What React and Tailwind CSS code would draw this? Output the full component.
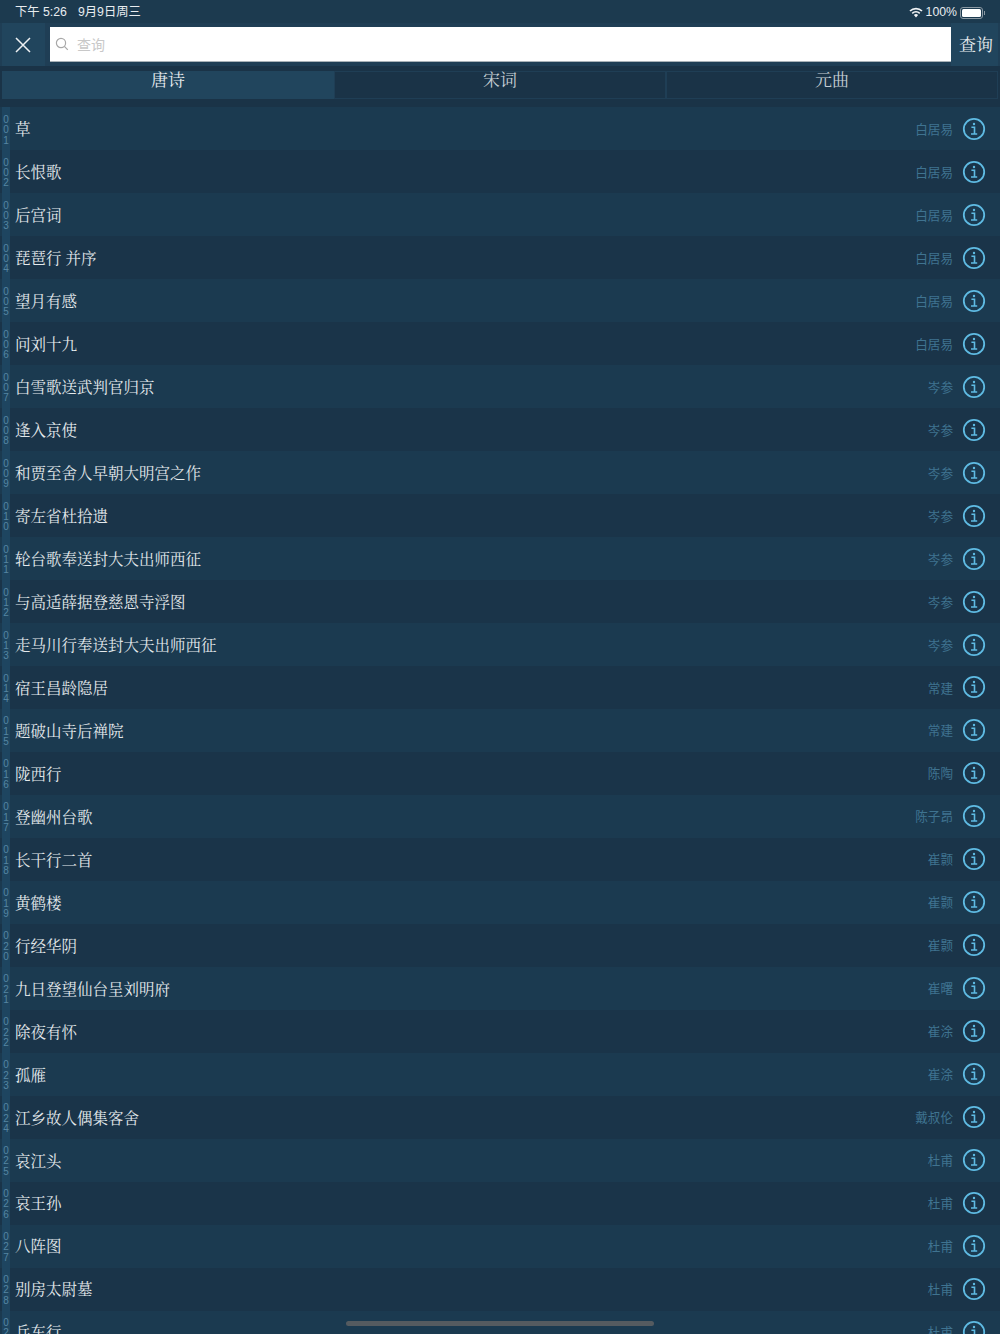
const rows = [
  ["草", "白居易"], ["长恨歌", "白居易"], ["后宫词", "白居易"], ["琵琶行 并序", "白居易"], ["望月有感", "白居易"], ["问刘十九", "白居易"],
  ["白雪歌送武判官归京", "岑参"], ["逢入京使", "岑参"], ["和贾至舍人早朝大明宫之作", "岑参"], ["寄左省杜拾遗", "岑参"], ["轮台歌奉送封大夫出师西征", "岑参"], ["与高适薛据登慈恩寺浮图", "岑参"], ["走马川行奉送封大夫出师西征", "岑参"],
  ["宿王昌龄隐居", "常建"], ["题破山寺后禅院", "常建"], ["陇西行", "陈陶"], ["登幽州台歌", "陈子昂"], ["长干行二首", "崔颢"], ["黄鹤楼", "崔颢"], ["行经华阴", "崔颢"], ["九日登望仙台呈刘明府", "崔曙"], ["除夜有怀", "崔涂"], ["孤雁", "崔涂"], ["江乡故人偶集客舍", "戴叔伦"], ["哀江头", "杜甫"], ["哀王孙", "杜甫"], ["八阵图", "杜甫"], ["别房太尉墓", "杜甫"], ["兵车行", "杜甫"],
];

const SERIF = { fontFamily: '"Noto Serif CJK SC", "Liberation Serif", "Noto Sans CJK SC", serif' };

function InfoIcon() {
  return (
    <svg width="24" height="24" viewBox="0 0 24 24" fill="none" stroke="#5fbbe3" className="shrink-0">
      <circle cx="12" cy="12" r="10.2" strokeWidth="1.8" />
      <path d="M9.4 10.2h3.1v6.6M9 17h6.2" strokeWidth="1.6" />
      <circle cx="12" cy="7" r="1.2" fill="#5fbbe3" stroke="none" />
    </svg>
  );
}

function Row({ index, title, author }) {
  const digits = String(index).padStart(3, "0").split("");
  const bg = index % 2 === 1 ? "bg-[#1b3a50]" : "bg-[#1a3449]";
  return (
    <div className={`flex h-[42.97px] shrink-0 items-center pl-[2px] pr-[14px] ${bg}`}>
      <div className="flex h-full w-2 shrink-0 flex-col items-center justify-center bg-[#1e4560] pt-[3px] text-[10px] leading-[10.3px] text-[#5585a2]">
        {digits.map((d, i) => <span key={i}>{d}</span>)}
      </div>
      <div className="ml-[5px] flex-1 text-[15.5px] text-[#e4e9ec]" style={SERIF}>{title}</div>
      <div className="mr-[9px] pt-[3px] text-[12.6px] text-[#3f7390]">{author}</div>
      <InfoIcon />
    </div>
  );
}

export default function App() {
  return (
    <div className="relative h-[1334px] w-[1000px] overflow-hidden bg-[#1a3347]" style={{ fontFamily: '"Liberation Sans", "Noto Sans CJK SC", sans-serif' }}>
      <div className="flex h-[23px] items-center justify-between bg-[#1c3a4f] pl-[15px] pr-[15px] pt-[2px] text-[12.3px] text-[#e8ecef]">
        <div className="flex gap-[11px]"><span>下午 5:26</span><span>9月9日周三</span></div>
        <div className="flex items-center gap-[3px]">
          <svg width="14" height="11" viewBox="0 0 14 11" fill="#f2f4f6">
            <path d="M7 10.5 4.9 8.1a3 3 0 0 1 4.2 0zM3.8 6.9 2.7 5.7a6.2 6.2 0 0 1 8.6 0l-1.1 1.2a4.6 4.6 0 0 0-6.4 0zM1.6 4.6.4 3.4a9.4 9.4 0 0 1 13.2 0l-1.2 1.2a7.8 7.8 0 0 0-10.8 0z" />
          </svg>
          <span>100%</span>
          <div className="flex items-center">
            <div className="h-[12px] w-[23px] rounded-[3px] border border-[#8b99a3] p-[1px]"><div className="h-full w-full rounded-[1.5px] bg-white" /></div>
            <div className="ml-[1px] h-[4px] w-[1px] bg-[#8b99a3]" />
          </div>
        </div>
      </div>
      <div className="flex h-[43px] items-stretch bg-[#1f3e55] pl-[2px] pr-[2px]">
        <div className="flex w-[43px] items-center justify-center bg-[#21455d] pr-[1px]">
          <svg width="18" height="18" viewBox="0 0 18 18" stroke="#eef1f3" strokeWidth="1.5"><path d="M2 2l14 14M16 2 2 16" /></svg>
        </div>
        <div className="my-[4px] ml-[5px] flex flex-1 items-center border-b border-[#a9b2b8] bg-white pl-[5px]">
          <svg width="14" height="14" viewBox="0 0 14 14" fill="none" stroke="#a8a8a8" strokeWidth="1.2"><circle cx="6" cy="6" r="4.6" /><path d="m9.4 9.4 3.4 3.4" /></svg>
          <span className="ml-[8px] pt-[2px] text-[14px] text-[#c8c8c8]">查询</span>
        </div>
        <div className="flex w-[47px] items-center justify-center bg-[#21455d] pb-[2px] pl-[3px] text-[17px] text-[#e8ecef]" style={SERIF}>查询</div>
      </div>
      <div className="mt-[5px] flex h-[28px] px-[2px] text-[17px]" style={SERIF}>
        <div className="w-[332px] bg-[#21455d] text-center leading-[16px] text-[#e8ecef]">唐诗</div>
        <div className="w-[332px] border border-[#1f3e55] text-center leading-[14px] text-[#c5ced4]">宋词</div>
        <div className="w-[332px] border border-[#1f3e55] text-center leading-[14px] text-[#c5ced4]">元曲</div>
      </div>
      <div className="mt-[8.4px] flex flex-col">
        {rows.map(([t, a], i) => <Row key={i} index={i + 1} title={t} author={a} />)}
      </div>
      <div className="absolute bottom-[8px] left-[346px] h-[5px] w-[308px] rounded-full bg-[#555b60]" />
    </div>
  );
}
